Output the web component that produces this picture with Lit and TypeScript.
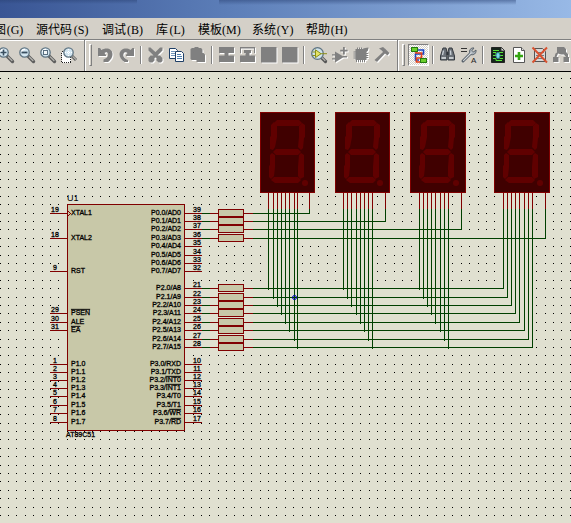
import { LitElement, html, svg, css } from "lit";
import type { SVGTemplateResult } from "lit";
import { customElement, property } from "lit/decorators.js";
import { classMap } from "lit/directives/class-map.js";

/* ---------- toolbar icons, each on a 16 x 16 grid ---------- */

const lens = svg`
  <path d="M9 9 L14.5 14.5" stroke="#5e5e5e" stroke-width="3.4" stroke-linecap="round"/>
  <path d="M10 9.6 L14.3 13.9" stroke="#b9b9b4" stroke-width="1.3"/>
  <circle cx="5.5" cy="5.5" r="4.7" fill="#d3e6f1" stroke="#5f7482" stroke-width="1.3"/>
  <path d="M2.6 5 A3.2 3.2 0 0 1 6 2.3" stroke="#fff" stroke-width="1.2" fill="none"/>`;

/* A disabled glyph is grey with a white edge to its lower right. */
const embossed = (shape: SVGTemplateResult) => svg`
  <g transform="translate(1 1)" fill="#fff" stroke="#fff" stroke-width="0">${shape}</g>
  <g fill="#808080" stroke="#808080" stroke-width="0">${shape}</g>`;

const icons: Record<string, SVGTemplateResult> = {
  zoomIn: svg`${lens}<path d="M2.5 5.5 H8.5 M5.5 2.5 V8.5" stroke="#3a4f60" stroke-width="1.6"/>`,
  zoomOut: svg`${lens}<path d="M2.5 5.5 H8.5" stroke="#3a4f60" stroke-width="1.8"/>`,
  zoomAll: svg`${lens}<rect x="3.5" y="3.5" width="4" height="4" fill="#f4f8fa" stroke="#5a6f80"/>`,
  zoomArea: svg`
    <rect x="0.5" y="4.5" width="9" height="11" fill="#fff" stroke="#222" stroke-dasharray="1 1" shape-rendering="crispEdges"/>
    <g transform="translate(2 0)">
      <path d="M9 9 L13 13" stroke="#5e5e5e" stroke-width="3"/>
      <path d="M9.6 9.3 L13 12.7" stroke="#b9b9b4" stroke-width="1.2"/>
      <circle cx="5.5" cy="5.5" r="4.7" fill="#d3e6f1" stroke="#5f7482" stroke-width="1.3"/>
      <path d="M5.5 2 V9 M2 5.5 H9" stroke="#fff" stroke-dasharray="1 1"/>
    </g>`,
  undo: embossed(svg`<path d="M0 1 H2 L3.5 3 C8 0 14.5 1.5 14.5 7 C14.5 11 12 13.5 10 15 H5.5 V12.5 C8.5 11.5 10.5 9.5 10 7 C9.5 5 8 5 6.5 6 L8 8 V9 H0 Z"/>`),
  redo: embossed(svg`<path d="M15 1 H13.5 L11.5 3 C7 0 1 2 0.5 7 C0.5 10.5 2.5 13 5.5 15 H9 V13 C6 12 3.5 9.5 4.5 7 C5 5 7 5 8.5 6 L7 8 V9 H15 Z"/>`),
  cut: embossed(svg`<path d="M0.5 0.5 H2.5 L7.5 5 L12 0.5 H14.5 V3.5 L9.5 8.5 H12 L14.5 11 V14 L13 15.5 H10.5 L8.5 13.5 V11 L7.5 10.5 L6.5 11 V13.5 L4.5 15.5 H2 L0.5 14 V11 L2.5 8.5 H5.5 L0.5 3.5 Z"/>`),
  copy: svg`
    <path d="M0.5 1.5 H6.5 L8.5 3.5 V11.5 H0.5 Z" fill="#fff" stroke="#1f3f66"/>
    <path d="M2 4.5 H6 M2 6.5 H7 M2 8.5 H6" stroke="#6f95bb"/>
    <path d="M6.5 4.5 H12.5 L14.5 6.5 V14.5 H6.5 Z" fill="#fff" stroke="#1f3f66"/>
    <path d="M8 7.5 H12 M8 9.5 H13 M8 11.5 H13" stroke="#4f7fae"/>`,
  paste: embossed(svg`<path d="M0.5 2 L2 1 H4 L5 0 H8 L9 1 H11 L12.5 2.5 V6 H13.5 L15 7.5 V15 H6.5 V13 H1.5 L0.5 12 Z"/>`),
  blockCopy: embossed(svg`<path d="M0 0 H15 V6 H9.5 V8.5 H15 V15 H0 V8.5 H5.5 V6 H0 Z"/>`),
  blockMove: embossed(svg`<path d="M0 0 H15 V6 H14 V1.5 H1 V6 H0 Z M4 3 H11 V6 H9.5 V8.5 H15 V15 H0 V8.5 H5.5 V6 H4 Z"/>`),
  block: embossed(svg`<path d="M0 0 H15.5 V15.5 H0 Z"/>`),
  pick: svg`
    <path d="M10 10 L14.5 14.5" stroke="#555" stroke-width="3.2" stroke-linecap="round"/>
    <path d="M10.6 10.2 L14.3 13.9" stroke="#b9b9b4" stroke-width="1.2"/>
    <circle cx="6.5" cy="6.5" r="5.8" fill="#cfe2ea" stroke="#5f7482" stroke-width="1.3"/>
    <path d="M1.5 5 H4 M1.5 8.5 H4 M9 6.7 H16" stroke="#8a8f1c"/>
    <path d="M4.5 2.8 L10 6.7 L4.5 10.6 Z" fill="#e6e463" stroke="#8a8f1c"/>`,
  makeDevice: embossed(svg`<path d="M3 4.5 L11 9.2 V9 H15 V10.4 H11 L3 15.5 V12.5 H0 V11.3 H3 V8.5 H0 V7.3 H3 Z M11 0 H12.8 V2.8 H15.6 V4.6 H12.8 V7.4 H11 V4.6 H8.2 V2.8 H11 Z"/>`),
  packaging: embossed(svg`<path d="M2.5 2 H4 V0.5 H5 V2 H6 V0.5 H7 V2 H8 V0.5 H9 V2 L12 1 L15.5 0.5 L15 3.5 L13.5 5 V6 H15 V7 H13.5 V8 H15 V9 H13.5 V10 H15 V11 H13.5 V13 H12 V15 H11 V13 H10 V15 H9 V13 H8 V15 H7 V13 H6 V15 H5 V13 H4 V15 H3 V13 H2.5 V11.5 H0.5 V10.5 H2.5 V9.5 H0.5 V8.5 H2.5 V7.5 H0.5 V6.5 H2.5 V5.5 H0.5 V4.5 H2.5 Z"/>`),
  hammer: embossed(svg`<path d="M5 1.5 L9 0 L11.5 2 L13 3.5 L15.5 6 L13.5 8.5 L11 6.5 L3 15 L0.5 13 L9 5 L7 3 Z"/>`),
  autorouter: svg`
    <path d="M7 3 H12.5 V7 H4.5 V13 H8" fill="none" stroke="#1746c8" stroke-width="1.6"/>
    <path d="M5 5 V6 H10.5 V11 H5.5 V15 H10" fill="none" stroke="#e2401a" stroke-width="1.7"/>
    <rect x="0.5" y="0.5" width="6" height="4" fill="#6cd02c" stroke="#257a10"/>
    <rect x="9.5" y="11.5" width="6" height="4" fill="#6cd02c" stroke="#257a10"/>`,
  find: svg`
    <path d="M3 1 H6 L7 5 V13 H0.5 V9 Z M12 1 H9 L8 5 V13 H14.5 V9 Z" fill="#6a7077" stroke="#353a40" stroke-width="1"/>
    <path d="M6.5 5 H8.5 V8 H6.5 Z" fill="#30353b"/>
    <path d="M3.5 3.5 L2.5 8 M10.5 3.5 L10.8 8" stroke="#c9d0d6" stroke-width="1.3"/>
    <path d="M1.5 11 H6 M9 11 H13.5" stroke="#e3e7ea" stroke-width="1.6"/>`,
  property: svg`
    <path d="M0 1.5 H6 M0 4.5 H6" stroke="#333"/>
    <path d="M2 14 L10 6" stroke="#59626b" stroke-width="3" stroke-linecap="round"/>
    <path d="M9 6.5 C7.5 3 10 0.5 13 1 L11 3.5 L12.5 5 L15 3 C15.5 6.5 12.5 8.5 9.8 7.5 Z" fill="#aab2b9" stroke="#59626b"/>
    <path d="M2.2 13.8 L10.5 5.5" stroke="#d5dade" stroke-width="1.1"/>
    <text x="10" y="16" font-family="Liberation Sans, sans-serif" font-size="8" fill="#222">A</text>`,
  design: svg`
    <path d="M1.5 0.5 H11.5 L14.5 3.5 V15.5 H1.5 Z" fill="#14251a" stroke="#222"/>
    <path d="M11 0.5 V4 H14.5" fill="#eee" stroke="#333"/>
    <path d="M3 3.5 H9 M3 5.5 H6 V8 M3 8.5 H6 M10 8.5 H13 M3 11.5 H6 V13.5 H12 M9.5 11.5 H13 M9 5.5 H13" fill="none" stroke="#5be03a"/>
    <ellipse cx="8" cy="8.5" rx="2" ry="3" fill="#7fd6e6" stroke="#2d8796"/>`,
  newSheet: svg`
    <path d="M2.5 0.5 H10.5 L13.5 3.5 V15.5 H2.5 Z" fill="#fff" stroke="#555"/>
    <path d="M10.5 0.5 V3.5 H13.5" fill="#ddd" stroke="#555"/>
    <path d="M8 5 V13 M4 9 H12" stroke="#35a512" stroke-width="2.6"/>`,
  removeSheet: svg`
    <path d="M2.5 1.5 H10.5 L13.5 4.5 V14.5 H2.5 Z" fill="#d8d8d8" stroke="#555"/>
    <path d="M4 5.5 H12 M4 8.5 H12 M4 11.5 H12" stroke="#777"/>
    <path d="M0.5 0.5 L15 15.5 M15 0.5 L0.5 15.5" stroke="#d9512f" stroke-width="1.9"/>`,
  hierarchy: embossed(svg`<path d="M4 0 H11 L13 2 V5 L15 7 V10 H16 V15 H10.5 V10 H13 L11 7.5 H8 L5 6.5 L3.5 10 H5.5 V15 H0 V10 H1.5 L2.5 6.5 L4 5.5 Z"/>`),
};

@customElement("tool-button")
export class ToolButton extends LitElement {
  @property() icon = "";
  @property() label = "";
  @property({ type: Boolean }) pressed = false;
  @property({ type: Boolean }) disabled = false;

  static styles = css`
    :host { display: block; flex: none; }
    .tool {
      display: flex; align-items: center; justify-content: center;
      width: 21px; height: 22px; margin: 0; padding: 0;
      border: 1px solid transparent; background: none;
    }
    .pressed {
      border-color: #808080 #fff #fff #808080;
      background: repeating-conic-gradient(#fff 0 25%, #d4d0c8 0 50%) 0 0 / 2px 2px;
    }
    .glyph { display: block; flex: none; width: 16px; height: 16px; overflow: visible; }
  `;

  render() {
    return html`
      <button class=${classMap({ tool: true, pressed: this.pressed })} aria-label=${this.label} ?disabled=${this.disabled}>
        <svg class="glyph" viewBox="0 0 16 16" fill="none" aria-hidden="true">${icons[this.icon]}</svg>
      </button>`;
  }
}

/* ---------- schematic ---------- */

const WIRE = "#004000";
const PIN = "#800000";
const BODY = "#c8c8a8";

const P0_ROWS = [213, 221, 229, 238, 246, 255, 263, 271];
const P2_ROWS = [288, 297, 305, 313, 322, 330, 339, 347];
const P3_ROWS = [364, 372, 380, 388, 396, 405, 413, 422];

type Pin = { y: number; num: string; name: string; over?: string };

const leftPins: Pin[] = [
  { y: 213, num: "19", name: "XTAL1" },
  { y: 238, num: "18", name: "XTAL2" },
  { y: 271, num: "9", name: "RST" },
  { y: 313, num: "29", name: "", over: "PSEN" },
  { y: 322, num: "30", name: "ALE" },
  { y: 330, num: "31", name: "", over: "EA" },
  ...P3_ROWS.map((y, i) => ({ y, num: `${i + 1}`, name: `P1.${i}` })),
];

const p3Names: [string, string][] = [
  ["RXD", ""], ["TXD", ""], ["", "INT0"], ["", "INT1"],
  ["T0", ""], ["T1", ""], ["", "WR"], ["", "RD"],
];

const rightPins: Pin[] = [
  ...P0_ROWS.map((y, i) => ({ y, num: `${39 - i}`, name: `P0.${i}/AD${i}` })),
  ...P2_ROWS.map((y, i) => ({ y, num: `${21 + i}`, name: `P2.${i}/A${8 + i}` })),
  ...P3_ROWS.map((y, i) => ({ y, num: `${10 + i}`, name: `P3.${i}/${p3Names[i][0]}`, over: p3Names[i][1] })),
];

const displays = [
  { x: 260, w: 54, pins: [268, 273, 277, 281, 285, 289, 294, 297], common: 309 },
  { x: 335, w: 54, pins: [343, 347, 351, 356, 360, 364, 368, 372], common: 385 },
  { x: 410, w: 55, pins: [419, 423, 427, 431, 435, 440, 444, 448], common: 461 },
  { x: 494, w: 55, pins: [503, 507, 511, 515, 519, 524, 528, 532], common: 545 },
];

const segments = [
  "17,8 39,8 42,11 39,14 16,14 14,11",
  "11,13 14,10 17,14 17,25 15,35 13,38 10,37 10,25 11,24",
  "42,11 45,13 45,25 44,26 43,36 41,38 38,35 39,25 39,14",
  "13,40 16,37 38,37 41,40 38,43 16,43",
  "12,41 15,43 15,55 14,64 11,67 9,65 9,54 10,53 10,43",
  "41,41 44,43 44,65 40,67 38,64 38,55 39,43",
  "11,68 14,65 38,65 41,68 38,71 15,71",
];

const besideWire = (x: number, y: number) =>
  y > 192 &&
  displays.some(
    (d, n) =>
      d.pins.some((px, i) => Math.abs(px - x) < 2 && y <= P2_ROWS[i]) ||
      (Math.abs(d.common - x) < 2 && y <= P0_ROWS[n]),
  );

/* Laid out past the usual window so that a wider one stays filled. */
const gridPath = (() => {
  let d = "";
  for (let r = 0; r < 120; r++) {
    const y = Math.round(78.1 + r * 8.4);
    for (let c = 0; c < 200; c++) {
      const x = Math.floor(c * 8.385 + 0.2);
      if (!besideWire(x, y)) d += `M${x} ${y}h1v1h-1z`;
    }
  }
  return d;
})();

@customElement("schematic-sheet")
export class SchematicSheet extends LitElement {
  static styles = css`
    :host { display: block; overflow: hidden; background: #e0e0d0; }
    .sheet { display: block; width: 100%; height: 100%; }
    .crisp { shape-rendering: crispEdges; }
    .name { font: 7px "Liberation Sans", sans-serif; fill: #000; stroke: #000; stroke-width: 0.3px; }
    .ref { font: 9px "Liberation Sans", sans-serif; fill: #000; }
    .end { text-anchor: end; }
    .mid { text-anchor: middle; }
    .over { text-decoration: overline; }
  `;

  private line(x1: number, y1: number, x2: number, y2: number, color: string) {
    return x1 === x2
      ? svg`<rect x=${x1} y=${y1} width="1" height=${y2 - y1} fill=${color}/>`
      : svg`<rect x=${x1} y=${y1} width=${x2 - x1} height="1" fill=${color}/>`;
  }

  private pinName(p: Pin) {
    return svg`${p.name}${p.over ? svg`<tspan class="over">${p.over}</tspan>` : ""}`;
  }

  private chip() {
    return svg`
      <g class="crisp">
        <rect x="67.5" y="204.5" width="117" height="226" fill=${BODY} stroke=${PIN}/>
        <path d="M68 211 L70.5 213.5 L68 216" fill="none" stroke=${PIN}/>
        ${leftPins.map((p) => this.line(50, p.y, 67, p.y, PIN))}
        ${rightPins.map((p) => this.line(185, p.y, 202, p.y, PIN))}
      </g>
      <text class="ref" x="67" y="201">U1</text>
      <text class="name" x="66" y="437">AT89C51</text>
      ${leftPins.map((p) => svg`
        <text class="name mid" x="55" y=${p.y - 1}>${p.num}</text>
        <text class="name" x="71" y=${p.y + 2}>${this.pinName(p)}</text>`)}
      ${rightPins.map((p) => svg`
        <text class="name mid" x="197" y=${p.y - 1}>${p.num}</text>
        <text class="name end" x="181" y=${p.y + 2}>${this.pinName(p)}</text>`)}`;
  }

  private resistor(y: number) {
    return svg`
      ${this.line(202, y, 210, y, WIRE)}
      ${this.line(210, y, 253, y, PIN)}
      <rect x="218.5" y=${y - 3.5} width="25" height="7" fill=${BODY} stroke=${PIN}/>`;
  }

  private wires() {
    const last = displays[displays.length - 1];
    return svg`
      ${displays.map((d, i) => this.line(253, P0_ROWS[i], d.common + 1, P0_ROWS[i], WIRE))}
      ${P2_ROWS.map((y, i) => this.line(253, y, last.pins[i] + 1, y, WIRE))}
      ${displays.map((d, n) => svg`
        ${d.pins.map((x, i) => this.line(x, 209, x, P2_ROWS[i] + (d === last ? 1 : 2), WIRE))}
        ${this.line(d.common, 209, d.common, P0_ROWS[n] + 1, WIRE)}
        ${[...d.pins, d.common].map((x) => this.line(x, 193, x, 209, PIN))}`)}`;
  }

  render() {
    return html`
      <svg class="sheet" role="img" aria-label="AT89C51">
        <g transform="translate(0 -72)">
          <path class="crisp" d=${gridPath} fill="#000"/>
          <g class="crisp">
            ${this.wires()}
            ${[...P0_ROWS.slice(0, 4), ...P2_ROWS].map((y) => this.resistor(y))}
          </g>
          ${this.chip()}
          ${displays.map((d) => svg`
            <g transform="translate(${d.x} 112)">
              <rect class="crisp" x="0.5" y="0.5" width=${d.w} height="80" fill="#400000" stroke=${PIN}/>
              ${segments.map((s) => svg`<polygon points=${s} fill="#600000"/>`)}
              <circle cx=${d.w - 9} cy="71" r="3" fill="#600000"/>
            </g>`)}
          <circle cx="294.5" cy="297.5" r="2" fill="none" stroke="#0000c0"/>
        </g>
      </svg>`;
  }
}

/* ---------- window ---------- */

const menus: [string, string][] = [
  ["图", "G"], ["源代码", "S"], ["调试", "B"], ["库", "L"], ["模板", "M"], ["系统", "Y"], ["帮助", "H"],
];

type Tool = { icon: string; label: string; off?: boolean; on?: boolean } | "sep";

const bands: Tool[][] = [
  [
    { icon: "zoomIn", label: "放大" }, { icon: "zoomOut", label: "缩小" },
    { icon: "zoomAll", label: "缩放到整图" }, { icon: "zoomArea", label: "缩放到区域" },
  ],
  [
    { icon: "undo", label: "撤销", off: true }, { icon: "redo", label: "重做", off: true }, "sep",
    { icon: "cut", label: "剪切", off: true }, { icon: "copy", label: "复制" }, { icon: "paste", label: "粘贴", off: true }, "sep",
    { icon: "blockCopy", label: "块复制", off: true }, { icon: "blockMove", label: "块移动", off: true },
    { icon: "block", label: "块旋转", off: true }, { icon: "block", label: "块删除", off: true }, "sep",
    { icon: "pick", label: "拾取元件" }, { icon: "makeDevice", label: "制作元件", off: true },
    { icon: "packaging", label: "封装工具", off: true }, { icon: "hammer", label: "分解", off: true },
  ],
  [
    { icon: "autorouter", label: "自动布线", on: true }, "sep",
    { icon: "find", label: "查找" }, { icon: "property", label: "属性分配" }, "sep",
    { icon: "design", label: "设计浏览器" }, { icon: "newSheet", label: "新建图纸" },
    { icon: "removeSheet", label: "删除图纸" }, { icon: "hierarchy", label: "层次", off: true },
  ],
];

@customElement("app-root")
export class AppRoot extends LitElement {
  static styles = css`
    :host {
      display: flex; flex-direction: column; height: 100vh; overflow: hidden;
      background: #d4d0c8; font-family: "Liberation Sans", "Noto Sans CJK SC", sans-serif;
    }
    .title {
      flex: none; height: 18px;
      background:
        linear-gradient(#2a427480, #2a427400) 0 0 / 24% 4px no-repeat,
        linear-gradient(#2a427480, #2a427400) 80% 0 / 52% 5px no-repeat,
        linear-gradient(90deg, #395594, #5c7eb8 40%, #7c9dd0 72%, #98b9e6);
    }
    .menu {
      display: flex; flex: none; gap: 12px; height: 21px; padding-top: 1px; margin-left: -6px;
      box-sizing: border-box; align-items: center;
    }
    .item {
      flex: none; margin: 0; padding: 0; border: 0; background: none; color: #000; white-space: nowrap;
      font: 12px/18px "Noto Sans CJK SC", sans-serif;
    }
    .key { display: inline-block; width: 18px; text-align: center; font: 12px/18px "Liberation Serif", serif; }
    .tools {
      display: flex; flex: none; height: 33px; box-sizing: border-box;
      border-top: 1px solid #808080; border-bottom: 1px solid #000; box-shadow: inset 0 1px #fff;
    }
    .band {
      display: flex; flex: none; align-items: center; padding: 2px 5px 4px 4px;
      border-right: 1px solid #808080; box-shadow: 1px 0 #fff;
    }
    .band:first-child { margin-left: -15px; }
    .band:last-child { border-right: 0; box-shadow: none; }
    .grip {
      flex: none; width: 3px; height: 22px; margin: 0 3px 0 0; box-sizing: border-box;
      border: 1px solid; border-color: #fff #808080 #808080 #fff;
    }
    .sep {
      flex: none; width: 1px; height: 18px; margin: 0 3px;
      border-left: 1px solid #808080; background: #fff;
    }
    .canvas { flex: 1; min-height: 0; }
  `;

  private tool(t: Tool) {
    return t === "sep"
      ? html`<span class="sep"></span>`
      : html`<tool-button icon=${t.icon} label=${t.label} ?disabled=${!!t.off} ?pressed=${!!t.on}></tool-button>`;
  }

  render() {
    return html`
      <div class="title"></div>
      <nav class="menu">
        ${menus.map(([name, key]) => html`<button class="item">${name}<span class="key">(${key})</span></button>`)}
      </nav>
      <div class="tools" role="toolbar">
        ${bands.map((b) => html`<div class="band"><span class="grip"></span>${b.map((t) => this.tool(t))}</div>`)}
      </div>
      <schematic-sheet class="canvas"></schematic-sheet>`;
  }
}
